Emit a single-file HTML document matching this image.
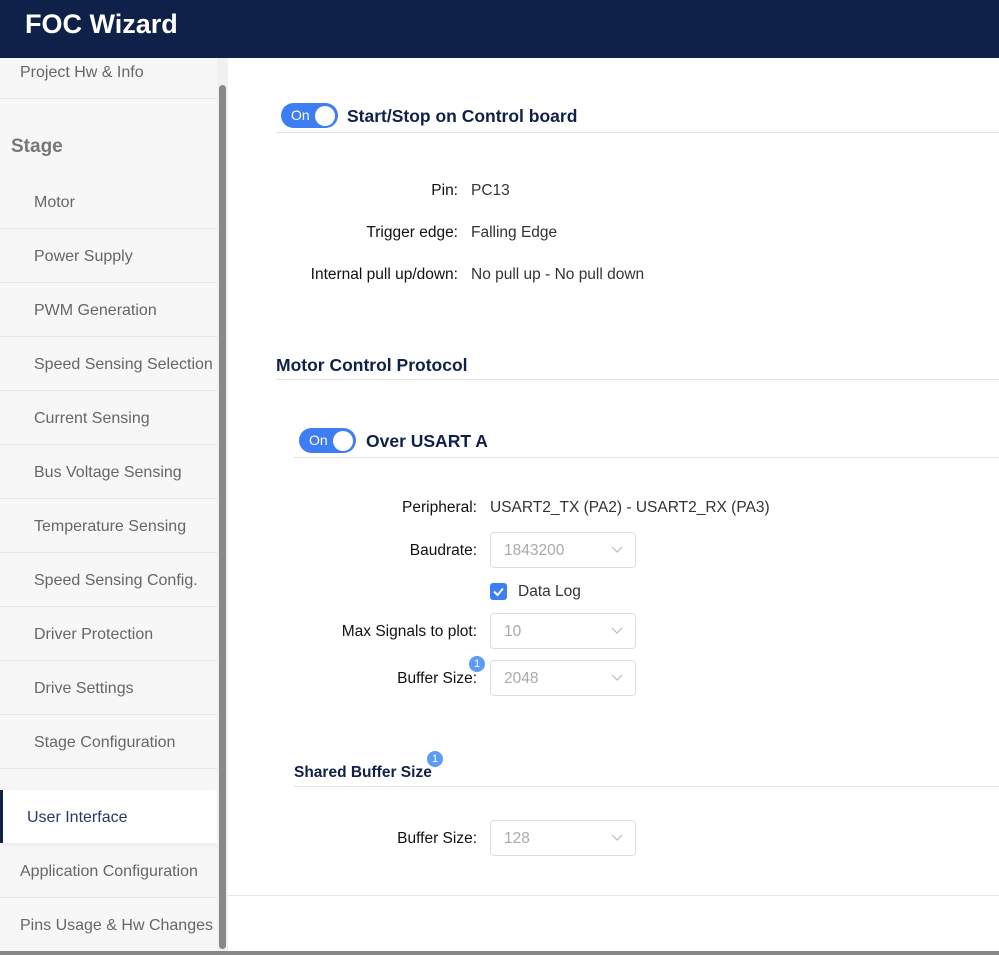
<!DOCTYPE html>
<html><head><meta charset="utf-8"><style>
*{box-sizing:border-box;margin:0;padding:0}
body{width:999px;height:955px;overflow:hidden;background:#fff;font-family:"Liberation Sans",sans-serif;position:relative;color:#222}
.a{position:absolute;white-space:nowrap}
#hdr{left:0;top:0;width:999px;height:58px;background:#0f2149;color:#fff;font-size:27px;font-weight:bold;padding:9px 0 0 25px}
#side{left:0;top:58px;width:217px;height:893px;background:#f7f7f7}
.it{position:absolute;left:0;width:217px;height:54px;border-bottom:1px solid #e6e6e6;color:#666;font-size:16px;line-height:56px;padding-left:34px}
.lb{position:absolute;text-align:right;font-size:15.5px;color:#111}
.v{position:absolute;font-size:15.5px;color:#333}
.sel{position:absolute;left:490px;width:146px;height:36px;border:1px solid #ddd;border-radius:4px;color:#aaa;font-size:15.5px;line-height:36px;padding-left:13px}
.sel svg{position:absolute;right:12px;top:13px}
.tg{position:absolute;width:57px;height:25px;border-radius:13px;background:#3d7ef5;color:#fff;font-size:14px;line-height:25px;padding-left:10px}
.tg:after{content:"";position:absolute;right:3px;top:2.5px;width:20px;height:20px;border-radius:50%;background:#fff}
.h{position:absolute;font-weight:bold;color:#0f2149;font-size:17.5px}
.ln{position:absolute;height:1px;background:#e2e2e2;right:0}
.bd{position:absolute;width:16px;height:16px;border-radius:50%;background:#5b9cf5;color:#fff;font-size:11px;text-align:center;line-height:16px}
</style></head><body>
<div id="hdr" class="a">FOC Wizard</div>
<div id="side" class="a">
<div class="it" style="top:-13px;padding-left:20px">Project Hw &amp; Info</div>
<div class="a" style="left:11px;top:78px;font-size:19px;font-weight:bold;color:#777">Stage</div>
<div class="it" style="top:117px">Motor</div>
<div class="it" style="top:171px">Power Supply</div>
<div class="it" style="top:225px">PWM Generation</div>
<div class="it" style="top:279px">Speed Sensing Selection</div>
<div class="it" style="top:333px">Current Sensing</div>
<div class="it" style="top:387px">Bus Voltage Sensing</div>
<div class="it" style="top:441px">Temperature Sensing</div>
<div class="it" style="top:495px">Speed Sensing Config.</div>
<div class="it" style="top:549px">Driver Protection</div>
<div class="it" style="top:603px">Drive Settings</div>
<div class="it" style="top:657px">Stage Configuration</div>
<div class="it" style="top:732px;height:53px;background:#fff;color:#2a3a66;padding-left:24px;border-left:3px solid #0f2149;border-bottom:none;box-shadow:0 2px 6px rgba(0,0,0,.06)">User Interface</div>
<div class="it" style="top:786px;padding-left:20px">Application Configuration</div>
<div class="it" style="top:840px;padding-left:20px;border:none">Pins Usage &amp; Hw Changes</div>
</div>
<div class="a" style="left:217px;top:58px;width:11px;height:893px;background:#f0f0f0"></div>
<div class="a" style="left:219px;top:85px;width:7px;height:864px;background:#888;border-radius:4px"></div>
<div class="a" style="left:0;top:951px;width:999px;height:4px;background:#888"></div>
<div class="a" style="left:228px;top:895px;width:771px;height:1px;background:#e8e8e8"></div>

<div class="tg" style="left:281px;top:103px">On</div>
<div class="h" style="left:347px;top:106px">Start/Stop on Control board</div>
<div class="ln" style="left:276px;top:132px"></div>
<div class="lb" style="right:541px;top:182px">Pin:</div><div class="v" style="left:471px;top:182px">PC13</div>
<div class="lb" style="right:541px;top:224px">Trigger edge:</div><div class="v" style="left:471px;top:224px">Falling Edge</div>
<div class="lb" style="right:541px;top:266px">Internal pull up/down:</div><div class="v" style="left:471px;top:266px">No pull up - No pull down</div>

<div class="h" style="left:276px;top:355px">Motor Control Protocol</div>
<div class="ln" style="left:276px;top:379px"></div>
<div class="tg" style="left:299px;top:428px">On</div>
<div class="h" style="left:366px;top:431px">Over USART A</div>
<div class="ln" style="left:294px;top:457px"></div>
<div class="lb" style="right:522px;top:499px">Peripheral:</div><div class="v" style="left:490px;top:499px">USART2_TX (PA2) - USART2_RX (PA3)</div>
<div class="lb" style="right:522px;top:542px">Baudrate:</div>
<div class="sel" style="top:532px">1843200<svg width="12" height="8"><path d="M1 1L6 6L11 1" fill="none" stroke="#bbb" stroke-width="1.2"/></svg></div>
<div class="a" style="left:490px;top:583px;width:17px;height:17px;border-radius:3px;background:#3d7ef5"><svg width="17" height="17"><path d="M4 8.5L7.5 12L13 5.5" fill="none" stroke="#fff" stroke-width="2"/></svg></div>
<div class="v" style="left:518px;top:583px">Data Log</div>
<div class="lb" style="right:522px;top:623px">Max Signals to plot:</div>
<div class="sel" style="top:613px">10<svg width="12" height="8"><path d="M1 1L6 6L11 1" fill="none" stroke="#bbb" stroke-width="1.2"/></svg></div>
<div class="lb" style="right:522px;top:670px">Buffer Size:</div>
<div class="bd" style="left:469px;top:656px">1</div>
<div class="sel" style="top:660px">2048<svg width="12" height="8"><path d="M1 1L6 6L11 1" fill="none" stroke="#bbb" stroke-width="1.2"/></svg></div>

<div class="h" style="left:294px;top:764px;font-size:15.5px">Shared Buffer Size</div>
<div class="bd" style="left:427px;top:751px">1</div>
<div class="ln" style="left:294px;top:786px"></div>
<div class="lb" style="right:522px;top:830px">Buffer Size:</div>
<div class="sel" style="top:820px">128<svg width="12" height="8"><path d="M1 1L6 6L11 1" fill="none" stroke="#bbb" stroke-width="1.2"/></svg></div>
</body></html>
